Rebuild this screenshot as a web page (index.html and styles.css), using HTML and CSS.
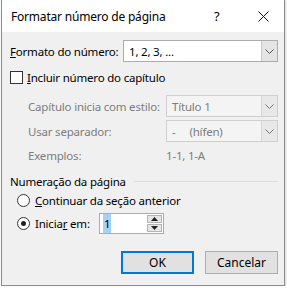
FILE: index.html
```html
<!DOCTYPE html>
<html lang="pt-br">
<head>
    <meta charset="UTF-8">
    <title>Formatar número de página</title>
    <link rel="stylesheet" href="styles.css">
</head>
<body>
    <div class="dialog">
        <div class="titlebar">
            <span class="title">Formatar número de página</span>
            <span class="help">?</span>
            <span class="close">
                <svg width="11" height="11" viewBox="0 0 11 11"><path d="M0.5 0.5 L10.5 10.5 M10.5 0.5 L0.5 10.5" stroke="#111" stroke-width="1"/></svg>
            </span>
        </div>

        <div class="content">
            <div class="row">
                <label class="label label-main"><u>F</u>ormato do número:</label>
                <div class="select select-main">
                    <span class="select-text">1, 2, 3, ...</span>
                    <span class="select-btn">
                        <svg width="9" height="5" viewBox="0 0 9 5"><path d="M0.5 0.5 L4.5 4.5 L8.5 0.5" stroke="#555" fill="none"/></svg>
                    </span>
                </div>
            </div>

            <div class="check-row">
                <span class="checkbox"></span>
                <span><u>I</u>ncluir número do capítulo</span>
            </div>

            <div class="chapter">
                <div class="row">
                    <label class="label label-sub">Capítulo inicia com estilo:</label>
                    <div class="select select-off">
                        <span class="select-text">Título 1</span>
                        <span class="select-btn">
                            <svg width="9" height="5" viewBox="0 0 9 5"><path d="M0.5 0.5 L4.5 4.5 L8.5 0.5" stroke="#777" fill="none"/></svg>
                        </span>
                    </div>
                </div>
                <div class="row row-sep">
                    <label class="label label-sub">Usar separador:</label>
                    <div class="select select-off">
                        <span class="select-text">-&nbsp;&nbsp;&nbsp;&nbsp;&nbsp;(hífen)</span>
                        <span class="select-btn">
                            <svg width="9" height="5" viewBox="0 0 9 5"><path d="M0.5 0.5 L4.5 4.5 L8.5 0.5" stroke="#777" fill="none"/></svg>
                        </span>
                    </div>
                </div>
                <div class="examples">
                    <span class="label label-sub">Exemplos:</span>
                    <span>1-1, 1-A</span>
                </div>
            </div>

            <div class="group-title">
                <span>Numeração da página</span>
                <span class="group-line"></span>
            </div>

            <div class="radio-row">
                <span class="radio"></span>
                <span><u>C</u>ontinuar da seção anterior</span>
            </div>
            <div class="radio-row radio-start">
                <span class="radio radio-on"></span>
                <span class="start-label">Inicia<u>r</u> em:</span>
                <div class="spin">
                    <span class="spin-value"><span class="spin-sel">1</span></span>
                    <div class="spin-btns">
                        <span class="spin-btn">
                            <svg width="7" height="4" viewBox="0 0 7 4"><path d="M0 4 L3.5 0 L7 4 Z" fill="#222"/></svg>
                        </span>
                        <span class="spin-btn">
                            <svg width="7" height="4" viewBox="0 0 7 4"><path d="M0 0 L3.5 4 L7 0 Z" fill="#222"/></svg>
                        </span>
                    </div>
                </div>
            </div>

            <div class="buttons">
                <button class="btn btn-ok">OK</button>
                <button class="btn">Cancelar</button>
            </div>
        </div>
    </div>
</body>
</html>
```

FILE: styles.css
```css
body {
    margin: 0;
    background-color: #fbfbfb;
    font-family: 'Noto Sans', 'Open Sans', sans-serif;
    font-size: 11.5px;
    letter-spacing: -0.2px;
    color: #000;
    white-space: nowrap;
}

.dialog {
    width: 284px;
    height: 287px;
    margin: -1px 0 0 1px;
    box-sizing: border-box;
    border: 1px solid #8c8c8c;
    background-color: #f0f0f0;
    box-shadow: 1px 1px 2px rgba(0, 0, 0, 0.15);
}

.titlebar {
    height: 32px;
    background-color: #fff;
    display: flex;
    align-items: center;
    padding-left: 9px;
    font-size: 12px;
}

.title {
    flex: 1;
}

.help {
    width: 20px;
    font-size: 13px;
    margin-right: 24px;
}

.close {
    display: flex;
    margin-right: 15px;
}

.content {
    padding: 8px 6px 0 8px;
}

.row {
    display: flex;
    align-items: center;
    height: 22px;
}

.label-main {
    width: 113px;
    flex-shrink: 0;
}

.label-sub {
    width: 138px;
    flex-shrink: 0;
    display: inline-block;
}

.select {
    flex: 1;
    height: 22px;
    box-sizing: border-box;
    border: 1px solid #acacac;
    background-color: #fff;
    display: flex;
    align-items: center;
}

.select-text {
    flex: 1;
    padding-left: 5px;
}

.select-btn {
    width: 15px;
    height: 20px;
    background-color: #e4e4e4;
    border-left: 1px solid #c8c8c8;
    display: flex;
    align-items: center;
    justify-content: center;
}

.select-off {
    background-color: #f4f4f4;
    border-color: #cfcfcf;
    color: #7d7d7d;
}

.select-off .select-btn {
    background-color: #e8e8e8;
    border-left-color: #d6d6d6;
}

.check-row {
    display: flex;
    align-items: center;
    height: 16px;
    margin-top: 7px;
}

.checkbox {
    width: 11px;
    height: 11px;
    border: 1px solid #333;
    background-color: #fff;
    margin-right: 4px;
}

.chapter {
    padding-left: 18px;
    margin-top: 10px;
    color: #7d7d7d;
}

.row-sep {
    margin-top: 3px;
}

.examples {
    height: 16px;
    margin-top: 5px;
    display: flex;
    align-items: center;
}

.group-title {
    display: flex;
    align-items: center;
    height: 16px;
    margin-top: 10px;
}

.group-line {
    flex: 1;
    height: 1px;
    background-color: #dcdcdc;
    margin-left: 8px;
}

.radio-row {
    display: flex;
    align-items: center;
    height: 16px;
    margin-top: 3px;
    padding-left: 7px;
}

.radio {
    width: 11px;
    height: 11px;
    border: 1px solid #333;
    border-radius: 50%;
    background-color: #fff;
    margin-right: 5px;
    position: relative;
}

.radio-on::after {
    content: '';
    position: absolute;
    left: 3px;
    top: 3px;
    width: 5px;
    height: 5px;
    border-radius: 50%;
    background-color: #222;
}

.radio-start {
    height: 21px;
    margin-top: 5px;
}

.start-label {
    width: 64px;
}

.spin {
    width: 65px;
    height: 21px;
    box-sizing: border-box;
    border: 1px solid #acacac;
    background-color: #fff;
    display: flex;
    align-items: center;
}

.spin-value {
    flex: 1;
    margin-left: 3px;
}

.spin-sel {
    background-color: #a6d0f5;
    padding: 2px 1px;
}

.spin-btns {
    display: flex;
    flex-direction: column;
    gap: 1px;
    margin-right: 1px;
}

.spin-btn {
    width: 15px;
    height: 8px;
    background-color: #e6e6e6;
    border: 1px solid #b5b5b5;
    box-sizing: border-box;
    display: flex;
    align-items: center;
    justify-content: center;
}

.buttons {
    display: flex;
    justify-content: flex-end;
    gap: 11px;
    margin-top: 17px;
}

.btn {
    width: 73px;
    height: 23px;
    font-family: inherit;
    font-size: 12px;
    background-color: #e1e1e1;
    border: 1px solid #adadad;
    padding: 0;
}

.btn-ok {
    border: 2px solid #0078d7;
}
```
